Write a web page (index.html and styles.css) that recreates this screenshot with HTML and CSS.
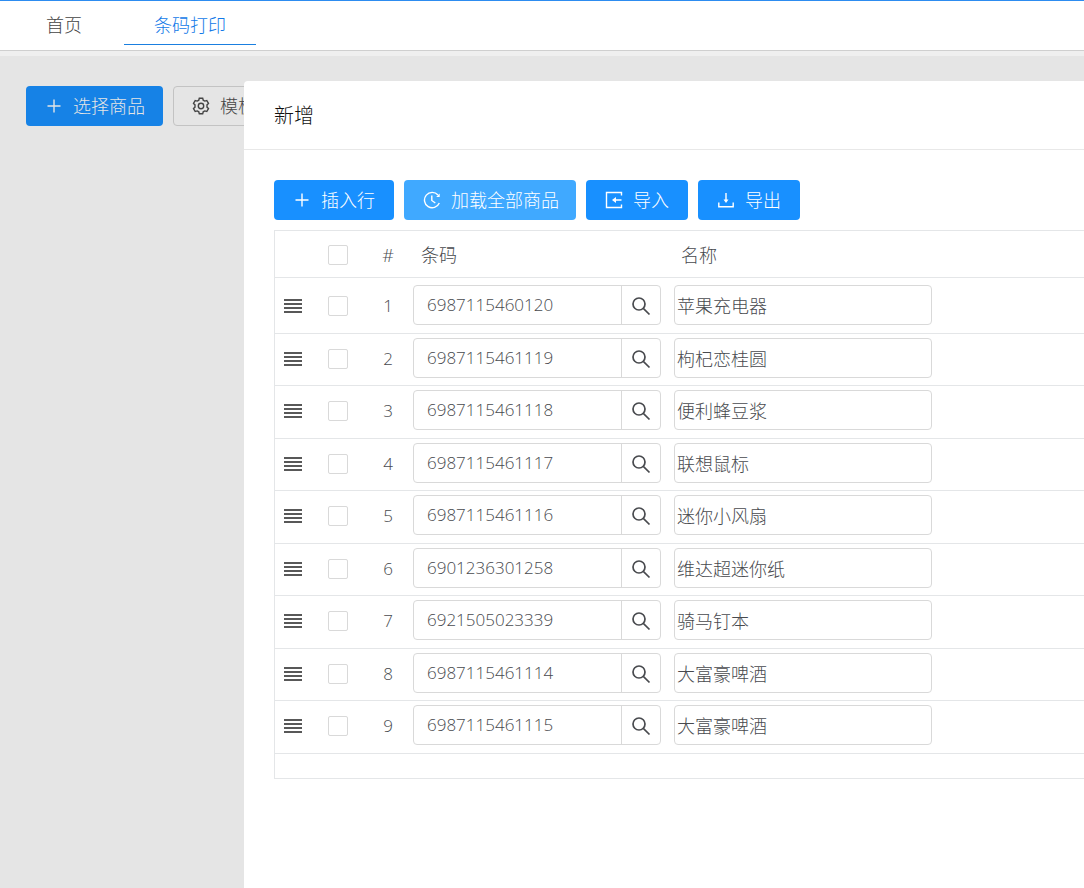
FILE: index.html
```html
<!DOCTYPE html>
<html lang="zh-CN">
<head>
<meta charset="utf-8">
<title>条码打印</title>
<link rel="stylesheet" href="styles.css">
</head>
<body>
<svg class="defs" aria-hidden="true">
  <symbol id="plus" viewBox="0 0 18 18"><path d="M9 2.500v13M2.500 9h13"/></symbol>
  <symbol id="gear" viewBox="0 0 18 18"><circle cx="9" cy="9" r="2.700"/><path d="M7.300 1.200h3.400l.5 2 1.500.9 2.100-.6 1.700 2.900-1.500 1.500v2.200l1.500 1.500-1.700 2.900-2.100-.6-1.500.9-.5 2H7.300l-.5-2-1.500-.9-2.100.6-1.700-2.900L3 10.100V7.900L1.500 6.400l1.700-2.900 2.100.6 1.500-.9z"/></symbol>
  <symbol id="clock" viewBox="0 0 18 18"><path d="M15 4A7.700 7.700 0 1 0 16.300 12M8.800 4.500v5l3.500 2.500"/><path class="solid" d="M16.700 2.500v3.500h-3.500z"/></symbol>
  <symbol id="import" viewBox="0 0 18 18"><path d="M16.500 4.500v-3h-15v15h15v-3M16.500 9H9"/><path class="solid" d="M11 6v6L7 9z"/></symbol>
  <symbol id="export" viewBox="0 0 18 18"><path d="M1.800 11.500v4.300h14.400v-4.300M9 2v8"/><path class="solid" d="M6.500 8.500h5L9 12z"/></symbol>
  <symbol id="search" viewBox="0 0 20 20"><circle cx="8" cy="8" r="6"/><path d="M12.300 12.300l6.200 6.200"/></symbol>
  <symbol id="drag" viewBox="0 0 18 16"><path d="M0 2h18M0 6h18M0 10h18M0 14h18"/></symbol>
</svg>

<nav class="tabs">
  <a class="tab" href="#home">首页</a>
  <a class="tab active" href="#barcode">条码打印</a>
</nav>

<main class="page">
  <div class="toolbar page-tools">
    <button class="btn primary muted" type="button"><svg class="icon"><use href="#plus"/></svg>选择商品</button>
    <button class="btn plain" type="button"><svg class="icon"><use href="#gear"/></svg>模板</button>
  </div>

  <section class="dialog" role="dialog" aria-labelledby="dialog-title">
    <header class="dialog-head"><h1 id="dialog-title">新增</h1></header>
    <div class="dialog-body">
      <div class="toolbar">
        <button class="btn primary" type="button"><svg class="icon"><use href="#plus"/></svg>插入行</button>
        <button class="btn primary hover" type="button"><svg class="icon"><use href="#clock"/></svg>加载全部商品</button>
        <button class="btn primary" type="button"><svg class="icon"><use href="#import"/></svg>导入</button>
        <button class="btn primary" type="button"><svg class="icon"><use href="#export"/></svg>导出</button>
      </div>
      <div class="grid">
        <table>
          <colgroup><col class="c-drag"><col class="c-check"><col class="c-num"><col class="c-code"><col></colgroup>
          <thead>
            <tr><th></th><th><input type="checkbox" aria-label="全选"></th><th>#</th><th class="label">条码</th><th class="label">名称</th></tr>
          </thead>
          <tbody id="rows"></tbody>
        </table>
      </div>
    </div>
  </section>
</main>
<script src="rows.js"></script>
</body>
</html>
```
FILE: rows.js
```js
const products = [
  ["6987115460120", "苹果充电器"],
  ["6987115461119", "枸杞恋桂圆"],
  ["6987115461118", "便利蜂豆浆"],
  ["6987115461117", "联想鼠标"],
  ["6987115461116", "迷你小风扇"],
  ["6901236301258", "维达超迷你纸"],
  ["6921505023339", "骑马钉本"],
  ["6987115461114", "大富豪啤酒"],
  ["6987115461115", "大富豪啤酒"]
];
document.getElementById("rows").innerHTML = products.map(([code, name], i) => `
  <tr>
    <td><svg class="drag"><use href="#drag"/></svg></td>
    <td><input type="checkbox" aria-label="选择第${i + 1}行"></td>
    <td>${i + 1}</td>
    <td class="field"><div class="code">
      <input type="text" value="${code}" aria-label="条码 ${i + 1}">
      <button type="button" aria-label="搜索"><svg class="search"><use href="#search"/></svg></button>
    </div></td>
    <td class="field"><input class="name" type="text" value="${name}" aria-label="名称 ${i + 1}"></td>
  </tr>`).join("");
```
FILE: styles.css
```css
* { box-sizing: border-box; }
body {
  margin: 0;
  min-height: 100vh;
  display: flex;
  flex-direction: column;
  background: #fff;
  color: #484a4e;
  font: 300 18px/26px "Open Sans", "Noto Sans CJK SC", sans-serif;
}
.defs { position: absolute; width: 0; height: 0; }
svg { flex: none; fill: none; stroke: currentColor; }
.solid { fill: currentColor; stroke: none; }
button, input { font: inherit; color: inherit; }

.tabs {
  display: flex;
  gap: 12px;
  height: 51px;
  padding: 0 16px;
  border-top: 1px solid #2d8cf0;
  border-bottom: 1px solid #cfcfcf;
}
.tab {
  height: 44px;
  padding: 11px 30px 0;
  border-bottom: 1px solid transparent;
  color: #444;
  text-decoration: none;
}
.tab.active { border-color: #1a7fe0; color: #1279e8; }

.page {
  flex: 1;
  display: flex;
  border-top: 5px solid #efefef;
  background: #e5e5e5;
  overflow: hidden;
}
.page-tools { width: 244px; padding: 30px 0 0 26px; overflow: hidden; flex: none; align-items: flex-start; }
.toolbar { display: flex; gap: 10px; }
.btn {
  flex: none;
  display: flex;
  align-items: center;
  gap: 10px;
  height: 40px;
  padding: 0 18px;
  border: 1px solid transparent;
  border-radius: 4px;
  white-space: nowrap;
}
.primary { background: #1890ff; color: #fff; }
.primary.hover { padding-right: 16px; background: #40a9ff; }
.primary.muted { padding-right: 17px; background: #1682e6; color: #e5e5e5; }
.plain { background: #e5e5e5; border-color: #c3c3c3; color: #444; }
.icon { width: 18px; height: 18px; stroke-width: 1.4; }

.dialog {
  flex: 1;
  min-width: 0;
  margin-top: 25px;
  border-top-left-radius: 4px;
  background: #fff;
}
.dialog-head { padding: 22px 30px 20px; border-bottom: 1px solid #e8e8e8; }
.dialog-head h1 { margin: 0; font-size: 20px; line-height: 26px; font-weight: 300; color: #111; }
.dialog-body { padding: 30px 0 0 30px; }

.grid {
  margin-top: 10px;
  padding-bottom: 24px;
  border: solid #e4e6e8;
  border-width: 1px 0 1px 1px;
  overflow: hidden;
}
table { width: 100%; table-layout: fixed; border-collapse: separate; border-spacing: 0; }
.c-drag { width: 36px; }
.c-check { width: 54px; }
.c-num { width: 46px; }
.c-code { width: 262px; }
th, td { padding: 0; border-bottom: 1px solid #e4e6e8; text-align: center; font-weight: 300; }
th { height: 47px; padding-top: 1px; }
th.label { padding-left: 10px; text-align: left; }
td { padding: 4px 0 6px; font-size: 17px; }
td.field { padding-bottom: 8px; padding-left: 2px; text-align: left; }
tr:nth-child(even) td { padding-bottom: 5px; }
tr:nth-child(even) td.field { padding-bottom: 7px; }
tbody tr:first-child td { padding-top: 7px; }
th.label:last-child { padding-left: 8px; }
td.field:last-child { padding-left: 1px; }

input[type="checkbox"] {
  appearance: none;
  display: block;
  width: 20px;
  height: 20px;
  margin: 0 auto;
  border: 1px solid #d9d9d9;
  border-radius: 2px;
  background: #fff;
}
.drag { display: block; width: 18px; height: 16px; margin: 0 auto; color: #222; stroke-width: 1.4; }
.code { display: flex; width: 248px; height: 40px; border: 1px solid #d9d9d9; border-radius: 4px; }
.code input { flex: 1; min-width: 0; padding: 0 13px; border: 0; background: none; }
.code button {
  display: flex;
  align-items: center;
  justify-content: center;
  width: 39px;
  padding: 2px 0 0;
  border: 0;
  border-left: 1px solid #d9d9d9;
  background: none;
}
.search { width: 20px; height: 20px; stroke-width: 1.7; }
.name {
  display: block;
  width: 258px;
  height: 40px;
  padding: 0 2px;
  border: 1px solid #d9d9d9;
  border-radius: 4px;
  background: #fff;
  font-size: 18px;
}
```
